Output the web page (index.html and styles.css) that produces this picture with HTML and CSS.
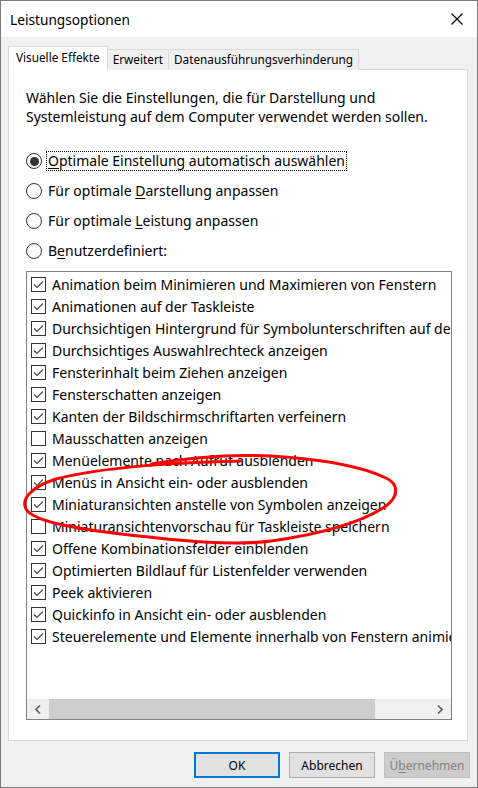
FILE: index.html
```html
<!DOCTYPE html>
<html lang="de">
<head>
<meta charset="utf-8">
<title>Leistungsoptionen</title>
<link rel="stylesheet" href="styles.css">
</head>
<body>
<div class="window">
  <div class="titlebar">
    <span class="title">Leistungsoptionen</span>
    <svg class="close" width="12" height="12" viewBox="0 0 12 12"><path d="M0.5 0.5 L11.5 11.5 M11.5 0.5 L0.5 11.5" stroke="#000" stroke-width="1.1" fill="none"/></svg>
  </div>
  <div class="content">
    <div class="tabs">
      <div class="tab active">Visuelle Effekte</div>
      <div class="tab">Erweitert</div>
      <div class="tab">Datenausführungsverhinderung</div>
    </div>
    <div class="panel">
      <p class="desc">Wählen Sie die Einstellungen, die für Darstellung und<br>Systemleistung auf dem Computer verwendet werden sollen.</p>
      <div class="radios">
        <div class="radio"><span class="circle checked"></span><span class="rlabel focus"><u>O</u>ptimale Einstellung automatisch auswählen</span></div>
        <div class="radio"><span class="circle"></span><span class="rlabel">Für optimale <u>D</u>arstellung anpassen</span></div>
        <div class="radio"><span class="circle"></span><span class="rlabel">Für optimale <u>L</u>eistung anpassen</span></div>
        <div class="radio"><span class="circle"></span><span class="rlabel">B<u>e</u>nutzerdefiniert:</span></div>
      </div>
      <div class="listbox">
        <div class="items">
          <div class="item"><span class="cb on"></span><span class="itext">Animation beim Minimieren und Maximieren von Fenstern</span></div>
          <div class="item"><span class="cb on"></span><span class="itext">Animationen auf der Taskleiste</span></div>
          <div class="item"><span class="cb on"></span><span class="itext">Durchsichtigen Hintergrund für Symbolunterschriften auf dem Desktop</span></div>
          <div class="item"><span class="cb on"></span><span class="itext">Durchsichtiges Auswahlrechteck anzeigen</span></div>
          <div class="item"><span class="cb on"></span><span class="itext">Fensterinhalt beim Ziehen anzeigen</span></div>
          <div class="item"><span class="cb on"></span><span class="itext">Fensterschatten anzeigen</span></div>
          <div class="item"><span class="cb on"></span><span class="itext">Kanten der Bildschirmschriftarten verfeinern</span></div>
          <div class="item"><span class="cb"></span><span class="itext">Mausschatten anzeigen</span></div>
          <div class="item"><span class="cb on"></span><span class="itext">Menüelemente nach Aufruf ausblenden</span></div>
          <div class="item"><span class="cb on"></span><span class="itext">Menüs in Ansicht ein- oder ausblenden</span></div>
          <div class="item"><span class="cb on"></span><span class="itext">Miniaturansichten anstelle von Symbolen anzeigen</span></div>
          <div class="item"><span class="cb"></span><span class="itext">Miniaturansichtenvorschau für Taskleiste speichern</span></div>
          <div class="item"><span class="cb on"></span><span class="itext">Offene Kombinationsfelder einblenden</span></div>
          <div class="item"><span class="cb on"></span><span class="itext">Optimierten Bildlauf für Listenfelder verwenden</span></div>
          <div class="item"><span class="cb on"></span><span class="itext">Peek aktivieren</span></div>
          <div class="item"><span class="cb on"></span><span class="itext">Quickinfo in Ansicht ein- oder ausblenden</span></div>
          <div class="item"><span class="cb on"></span><span class="itext">Steuerelemente und Elemente innerhalb von Fenstern animieren</span></div>
        </div>
        <div class="hscroll">
          <span class="arrow"><svg width="6" height="9" viewBox="0 0 6 9"><path d="M5 0.5 L1 4.5 L5 8.5" stroke="#606060" stroke-width="1.6" fill="none"/></svg></span>
          <span class="track"><span class="thumb"></span></span>
          <span class="arrow"><svg width="6" height="9" viewBox="0 0 6 9"><path d="M1 0.5 L5 4.5 L1 8.5" stroke="#606060" stroke-width="1.6" fill="none"/></svg></span>
        </div>
      </div>
    </div>
    <div class="buttons">
      <button class="btn default">OK</button>
      <button class="btn">Abbrechen</button>
      <button class="btn disabled">Ü<u>b</u>ernehmen</button>
    </div>
  </div>
  <svg class="annot" width="478" height="788" viewBox="0 0 478 788">
    <path d="M 240 460 C 180 461, 100 466, 55 478 C 30 486, 20 498, 25 508 C 32 520, 70 527, 120 533 C 180 540, 230 545, 270 540 C 320 533, 360 522, 385 505 C 398 495, 398 483, 385 477 C 360 465, 320 458, 270 455 C 230 453, 190 456, 150 463" stroke="#f00" stroke-width="3" fill="none" stroke-linecap="round" stroke-linejoin="round"/>
  </svg>
</div>
</body>
</html>
```
FILE: styles.css
```css
* { box-sizing: border-box; }
html, body { margin: 0; padding: 0; background: #3a3a3a; }
body {
  font-family: "Noto Sans", "Open Sans", sans-serif;
  font-size: 14px;
  color: #000;
}
.window {
  position: relative;
  width: 478px;
  height: 788px;
  background: #f0f0f0;
  border: 1px solid #7a7a7a;
  overflow: hidden;
}
.titlebar {
  height: 36px;
  background: #fff;
  display: flex;
  align-items: center;
  justify-content: space-between;
  padding: 0 14px 0 9px;
}
.title { font-size: 13.7px; }
.close { display: block; }
.content {
  padding: 9px 7px 0 7px;
}
.tabs {
  display: flex;
  align-items: flex-end;
  height: 24px;
  margin-bottom: -1px;
  font-size: 11.75px;
}
.tab {
  position: relative;
  height: 21px;
  line-height: 19px;
  padding: 0 5px;
  background: #f0f0f0;
  border: 1px solid #d9d9d9;
  border-bottom: none;
  margin-left: -1px;
  white-space: nowrap;
}
.tab.active {
  z-index: 1;
  height: 24px;
  line-height: 21px;
  padding: 0 7px;
  margin-left: 0;
  background: #fff;
  border-bottom: 1px solid #fff;
}
.panel {
  width: 460px;
  background: #fff;
  border: 1px solid #d9d9d9;
  padding: 18px 0 20px 17px;
}
.desc {
  margin: 0;
  line-height: 19px;
}
.radios {
  margin-top: 20px;
}
.radio {
  height: 30px;
  display: flex;
  align-items: center;
  gap: 4px;
}
.circle {
  width: 16px;
  height: 16px;
  border: 1px solid #333;
  border-radius: 50%;
  display: flex;
  align-items: center;
  justify-content: center;
  background: #fff;
}
.circle.checked::after {
  content: "";
  width: 9px;
  height: 9px;
  border-radius: 50%;
  background: #333;
}
.rlabel {
  padding: 0 1px;
  line-height: 18px;
  border: 1px solid transparent;
}
.rlabel.focus { border: 1px dotted #000; }
u { text-decoration: underline; text-underline-offset: 2px; }
.listbox {
  margin-top: 5px;
  width: 426px;
  height: 449px;
  border: 1px solid #828282;
  display: flex;
  flex-direction: column;
  overflow: hidden;
}
.items {
  flex: 1;
  padding-top: 1px;
  overflow: hidden;
}
.item {
  height: 22px;
  display: flex;
  align-items: center;
  gap: 6px;
  padding-left: 4px;
  white-space: nowrap;
}
.cb {
  flex: none;
  width: 15px;
  height: 15px;
  border: 1px solid #333;
  background: #fff no-repeat center;
}
.cb.on {
  background-image: url("data:image/svg+xml,%3Csvg xmlns='http://www.w3.org/2000/svg' width='13' height='13' viewBox='0 0 13 13'%3E%3Cpath d='M2 6.5 L5 9.5 L11 3.5' stroke='%23444' stroke-width='1.1' fill='none'/%3E%3C/svg%3E");
}
.hscroll {
  height: 20px;
  display: flex;
  background: #f0f0f0;
}
.arrow {
  width: 22px;
  display: flex;
  align-items: center;
  justify-content: center;
}
.track {
  flex: 1;
  display: flex;
  align-items: stretch;
}
.thumb {
  width: 326px;
  background: #cdcdcd;
}
.buttons {
  display: flex;
  justify-content: flex-end;
  gap: 9px;
  margin-top: 11px;
}
.btn {
  width: 86px;
  height: 26px;
  font-family: inherit;
  font-size: 12px;
  color: #000;
  background: #e1e1e1;
  border: 1px solid #adadad;
  padding: 0;
}
.btn.default { border: 2px solid #0078d7; }
.btn.disabled { background: #cccccc; border-color: #bfbfbf; color: #838383; }
.annot {
  position: absolute;
  left: 0;
  top: 0;
  pointer-events: none;
}
```
